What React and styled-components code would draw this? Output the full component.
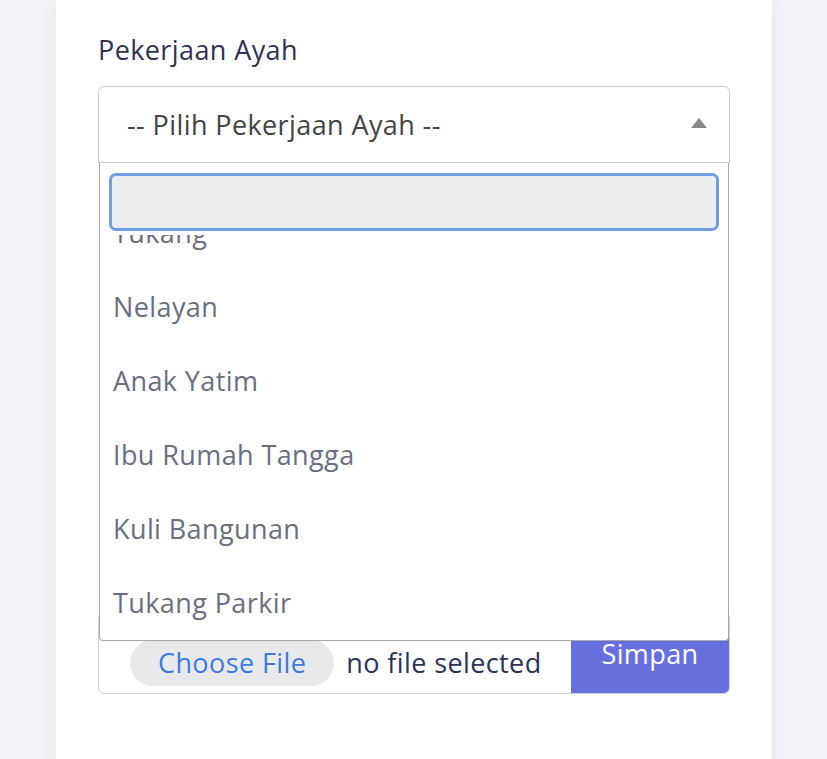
import { useLayoutEffect, useRef } from "react"
import styled, { createGlobalStyle } from "styled-components"

const GlobalStyle = createGlobalStyle`
  html, body {
    margin: 0;
    padding: 0;
    background: #f1f2f7;
    font-family: "Open Sans", "Noto Sans", sans-serif;
    letter-spacing: 0.4px;
  }
`

const Page = styled.div`
  height: 759px;
  overflow: hidden;
  padding: 0 55px 0 56px;
`

const Card = styled.div`
  background: #fff;
  height: 100%;
  padding: 30px 42px 0 42px;
  box-shadow: 0 0 18px rgba(40, 50, 110, 0.05);
`

const Group = styled.div`
  position: relative;
`

const Label = styled.label`
  display: block;
  font-size: 27px;
  color: #2f3157;
  margin-bottom: 16px;
  line-height: 40px;
`

const SelectBox = styled.div`
  height: 77px;
  border: 1px solid #c9c9cc;
  border-bottom-color: #c4c4c8;
  border-radius: 6px 6px 0 0;
  display: flex;
  align-items: center;
  justify-content: space-between;
  padding: 0 22px 0 28px;
  font-size: 27px;
  color: #444;
  box-sizing: border-box;
`

const Arrow = styled.span`
  width: 0;
  height: 0;
  border-left: 8px solid transparent;
  border-right: 8px solid transparent;
  border-bottom: 10px solid #888;
  margin-top: -4px;
`

const Dropdown = styled.div`
  position: absolute;
  left: 1px;
  right: 1px;
  top: 133px;
  height: 478px;
  background: #fff;
  border: 1px solid #aaa;
  border-top: none;
  border-radius: 0 0 4px 4px;
  box-sizing: border-box;
  z-index: 5;
  display: flex;
  flex-direction: column;
  box-shadow: 0 1px 2px rgba(0, 0, 0, 0.05);
`

const SearchWrap = styled.div`
  padding: 10px 9px 4px 9px;
`

const Search = styled.input`
  width: 100%;
  height: 58px;
  box-sizing: border-box;
  background: #ededf0;
  border: 3px solid #6d9ee2;
  border-radius: 7px;
  outline: none;
  font-size: 26px;
  font-family: inherit;
`

const Options = styled.ul`
  list-style: none;
  margin: 0;
  padding: 0;
  flex: 1;
  overflow-y: auto;
  scrollbar-width: none;
  &::-webkit-scrollbar {
    display: none;
  }
`

const Option = styled.li`
  height: 74px;
  line-height: 74px;
  padding: 0 13px;
  font-size: 27px;
  color: #6b6e80;
`

const FileGroup = styled.div`
  display: flex;
  align-items: stretch;
  height: 82px;
  border: 1px solid #cfd2e0;
  border-radius: 6px;
  overflow: hidden;
  box-sizing: border-box;
`

const FileField = styled.div`
  flex: 1;
  display: flex;
  align-items: flex-end;
  padding: 0 0 7px 31px;
  gap: 12px;
`

const ChooseButton = styled.span`
  background: #e9e9ec;
  color: #3a7be0;
  border-radius: 24px;
  height: 46px;
  line-height: 46px;
  padding: 0 28px;
  font-size: 27px;
`

const FileText = styled.span`
  font-size: 27px;
  color: #2d3358;
  line-height: 46px;
`

const SaveButton = styled.button`
  width: 158px;
  background: #6870e0;
  color: #fff;
  border: none;
  font-family: inherit;
  letter-spacing: inherit;
  font-size: 27px;
  padding: 0;
  display: flex;
  align-items: center;
  justify-content: center;
`

const HiddenGap = styled.div`
  height: 449px;
`

const options = [
  "Tidak Bekerja",
  "PNS",
  "Wiraswasta",
  "Petani",
  "Tukang",
  "Nelayan",
  "Anak Yatim",
  "Ibu Rumah Tangga",
  "Kuli Bangunan",
  "Tukang Parkir",
]

export default function App() {
  const listRef = useRef(null)

  useLayoutEffect(() => {
    if (listRef.current) listRef.current.scrollTop = 74 * 4 + 39
  }, [])

  return (
    <>
      <GlobalStyle />
      <Page>
        <Card>
          <Group>
            <Label>Pekerjaan Ayah</Label>
            <SelectBox>
              <span>-- Pilih Pekerjaan Ayah --</span>
              <Arrow />
            </SelectBox>
            <Dropdown>
              <SearchWrap>
                <Search type="text" />
              </SearchWrap>
              <Options ref={listRef}>
                {options.map((o) => (
                  <Option key={o}>{o}</Option>
                ))}
              </Options>
            </Dropdown>
          </Group>
          <Group>
            <HiddenGap />
            <FileGroup>
              <FileField>
                <ChooseButton>Choose File</ChooseButton>
                <FileText>no file selected</FileText>
              </FileField>
              <SaveButton>Simpan</SaveButton>
            </FileGroup>
          </Group>
        </Card>
      </Page>
    </>
  )
}
